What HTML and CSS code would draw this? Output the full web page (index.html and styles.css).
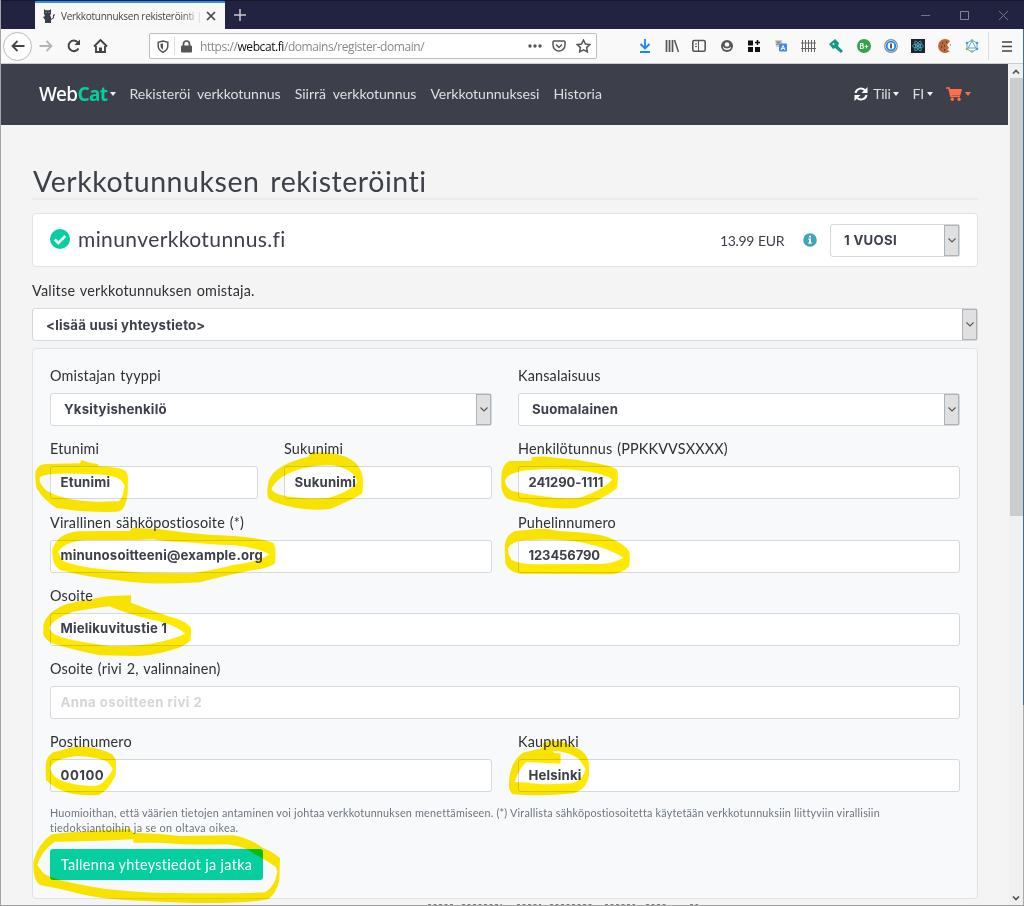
FILE: index.html
```html
<!DOCTYPE html>
<html lang="fi">
<head>
<meta charset="utf-8">
<title>Verkkotunnuksen rekisteröinti | WebCat</title>
<link rel="stylesheet" href="styles.css">
</head>
<body>
<div class="window">
  <header class="tabbar">
    <div class="tab">
      <svg class="cat" width="12" height="14" viewBox="0 0 12 14"><path fill="#39404c" d="M1 0 2.500 1.200h4L8 0v5L7 6.500 8 8v2l2-1.500V6l1.500-1 .5 1-1 1v2l-3 2v3H2v-3L0 8l2-1L1 5z"/><path d="M2.500 3.500h1M5.500 3.500h1" stroke="#aab"/></svg>
      <span class="tab-title">Verkkotunnuksen rekisteröinti |</span>
      <svg width="10" height="10" viewBox="0 0 10 10"><path d="M1 1l8 8M9 1 1 9" stroke="#444" stroke-width="1.700"/></svg>
    </div>
    <svg class="plus" width="12" height="12" viewBox="0 0 12 12"><path d="M6 0v12M0 6h12" stroke="#c7c7d2" stroke-width="1.500"/></svg>
    <div class="controls">
      <svg width="9" height="9"><path d="M0 4.500h9" stroke="#74748a"/></svg>
      <svg width="9" height="9"><path d="M.5.5h8v8h-8z" fill="none" stroke="#858598"/></svg>
      <svg width="9" height="9"><path d="M0 0l9 9M9 0 0 9" stroke="#74748a"/></svg>
    </div>
  </header>
  <div class="toolbar">
    <div class="back"><svg width="14" height="14" viewBox="0 0 14 14"><path d="M13.500 7H1.500M6.500 2l-5 5 5 5" fill="none" stroke="#444" stroke-width="1.800"/></svg></div>
    <svg class="forward" width="14" height="14" viewBox="0 0 14 14"><path d="M.5 7h12M7.500 2l5 5-5 5" fill="none" stroke="#b4b4b6" stroke-width="1.800"/></svg>
    <svg class="reload" width="14" height="14" viewBox="0 0 14 14"><path d="M11.500 9.500A5.300 5.300 0 1 1 11 3.500" fill="none" stroke="#444" stroke-width="1.900"/><path d="M13 .5V6H7.500z" fill="#444"/></svg>
    <svg class="home" width="15" height="14" viewBox="0 0 15 14"><path d="M1 7.500 7.500 1 14 7.500M3 7v6h9V7" fill="none" stroke="#444" stroke-width="1.900"/><path d="M6 13V8.500h3V13" fill="#444"/></svg>
    <div class="address">
      <svg width="12" height="13" viewBox="0 0 12 13"><path d="M6 1 1.200 2.300V6c0 3 2 5 4.800 6.200C8.800 11 10.800 9 10.800 6V2.300z" fill="none" stroke="#555" stroke-width="1.500"/><path d="M6 3.300 3.500 4v2c0 1.500 1 2.900 2.500 3.700z" fill="#555"/></svg>
      <span class="divider"></span>
      <svg class="lock" width="11" height="13" viewBox="0 0 11 13"><path d="M2.500 6V4a3 3 0 0 1 6 0v2" fill="none" stroke="#555" stroke-width="1.700"/><rect y="5.500" width="11" height="7" rx="1" fill="#555"/></svg>
      <span class="url">https://<b>webcat.fi</b>/domains/register-domain/</span>
      <svg class="dots" width="14" height="4"><g fill="#555"><circle cx="2" cy="2" r="1.700"/><circle cx="7" cy="2" r="1.700"/><circle cx="12" cy="2" r="1.700"/></g></svg>
      <svg class="pocket" width="14" height="13" viewBox="0 0 14 13"><path d="M2 1h10q1 0 1 1v3a6 6 0 0 1-12 0V2q0-1 1-1z" fill="none" stroke="#555" stroke-width="1.500"/><path d="M4 4.500l3 3 3-3" fill="none" stroke="#555" stroke-width="1.500"/></svg>
      <svg width="15" height="14" viewBox="0 0 15 14"><path d="M7.500 1l1.900 4 4.300.6-3.100 3 .8 4.300-3.900-2-3.900 2 .8-4.300-3.100-3L5.600 5z" fill="none" stroke="#555" stroke-width="1.500"/></svg>
    </div>
    <div class="extensions">
      <svg width="14" height="14" viewBox="0 0 14 14"><path d="M7 0v9M2.500 5l4.500 4.500L11.500 5M2 13h10" fill="none" stroke="#1588ff" stroke-width="1.800"/></svg>
      <svg width="14" height="14" viewBox="0 0 14 14"><path d="M1.500 1v12M4.500 1v12M7.500 1v12" stroke="#555" stroke-width="1.700"/><path d="M9.500 1l4 12" stroke="#555" stroke-width="1.500"/></svg>
      <svg width="14" height="14" viewBox="0 0 14 14"><rect x=".8" y="1.500" width="12.400" height="10.800" rx="1.500" fill="none" stroke="#555" stroke-width="1.600"/><path d="M6.500 2v10M3 5h2M3 7.500h2" stroke="#555"/></svg>
      <svg width="14" height="14" viewBox="0 0 14 14"><circle cx="7" cy="7" r="6" fill="#555"/><circle cx="7" cy="5.500" r="2.300" fill="#f9f9fa"/><path d="M3 7.500q0 3.500 4 3.500t4-3.500q-1.500 2-4 2t-4-2z" fill="#f9f9fa"/></svg>
      <svg width="14" height="14" viewBox="0 0 14 14"><path d="M1 1.500h5v5H1zM1 8h5v5H1zM8 8h5v5H8z" fill="#111"/><path d="M10.500 1v5M8 3.500h5" stroke="#111" stroke-width="1.500"/></svg>
      <svg width="14" height="14" viewBox="0 0 14 14"><path d="M1 1h7v7H2z" fill="#ccc"/><path d="M2 3h5M4 2v4M2 6l4-3" stroke="#887"/><rect x="5" y="4.500" width="8" height="8" rx="1" fill="#4285f4"/><path d="M7 11l2-4.500L11 11M8 9.500h2" stroke="#fff" fill="none"/></svg>
      <svg width="15" height="14" viewBox="0 0 15 14"><path d="M1.500 1v12M4.500 1v12M7.500 1v12M10.500 1v12M13.500 1v12M0 4h15M0 9.500h15" stroke="#666"/></svg>
      <svg width="14" height="14" viewBox="0 0 14 14"><path d="M0 5 6 0l4 4-1 3 5 5-2 2-6-5-2 1z" fill="#139a86"/><circle cx="4.500" cy="5" r="1" fill="#d8f3ef"/></svg>
      <svg width="14" height="14" viewBox="0 0 14 14"><circle cx="7" cy="7" r="7" fill="#36a34b"/><text x="2.400" y="9.600" class="ext-text">B+</text></svg>
      <svg width="14" height="14" viewBox="0 0 14 14"><circle cx="7" cy="7" r="6.300" fill="#fff" stroke="#889" stroke-width="1.200"/><circle cx="7" cy="7" r="4.300" fill="#fff" stroke="#1687f5" stroke-width="1.800"/><path d="M7 4.500v5" stroke="#333" stroke-width="1.600"/></svg>
      <svg width="14" height="14" viewBox="0 0 14 14"><path d="M0 0h14v14H0z" fill="#20232a"/><g fill="none" stroke="#45b7d0" stroke-width=".8"><ellipse cx="7" cy="7" rx="5.500" ry="2"/><ellipse cx="7" cy="7" rx="5.500" ry="2" transform="rotate(60 7 7)"/><ellipse cx="7" cy="7" rx="5.500" ry="2" transform="rotate(120 7 7)"/></g><circle cx="7" cy="7" r="1" fill="#6ddcf3"/></svg>
      <svg width="14" height="14" viewBox="0 0 14 14"><path d="M12 2a7 7 0 1 0 0 10l-3-1 2-2-2-3z" fill="#b8683c"/><circle cx="12.500" cy="6" r=".7" fill="#b8683c"/><path d="M4 4h1M8 3h1M3 8h1M6 7h1M6 11h1" stroke="#532d1a" stroke-width="1.300"/></svg>
      <svg width="14" height="14" viewBox="0 0 14 14"><path d="M7 1l5 3v6l-5 3-5-3V4z" fill="none" stroke="#62a9dc"/><path d="M7 2l4 7H3z" fill="none" stroke="#62a9dc"/><g fill="#89bd57"><circle cx="7" cy="1.500" r="1.300"/><circle cx="7" cy="12.500" r="1.300"/><circle cx="2" cy="10" r="1.300"/></g><g fill="#4b9bd7"><circle cx="2" cy="4" r="1.300"/><circle cx="12" cy="4" r="1.300"/><circle cx="12" cy="10" r="1.300"/></g></svg>
    </div>
    <span class="tool-divider"></span>
    <svg class="menu" width="10" height="11"><path d="M0 1h10M0 5.500h10M0 10h10" stroke="#444" stroke-width="1.500"/></svg>
  </div>
  <div class="viewport">
    <div class="page">
      <nav class="navbar">
        <div class="brand">Web<span>Cat</span></div><i class="caret"></i>
        <a class="first">Rekisteröi verkkotunnus</a><a>Siirrä verkkotunnus</a><a>Verkkotunnuksesi</a><a>Historia</a>
        <div class="nav-right">
          <svg width="14" height="14" viewBox="0 0 14 14"><path d="M1.500 6A5.500 5.500 0 0 1 11.500 4M12.500 8A5.500 5.500 0 0 1 2.500 10" fill="none" stroke="#fff" stroke-width="2"/><path d="M13.500 0v6h-6zM.5 14V8h6z" fill="#fff"/></svg>
          <span class="account">Tili</span><i class="caret"></i>
          <span class="lang">FI</span><i class="caret"></i>
          <svg class="cart" width="17" height="14" viewBox="0 0 17 14"><path d="M0 1h3l2 8.500h9" fill="none" stroke="#ff7046" stroke-width="1.700"/><path d="M3.500 2H16l-1.700 6.500H5z" fill="#ff7046"/><circle cx="6.300" cy="12.300" r="1.700" fill="#ff7046"/><circle cx="13" cy="12.300" r="1.700" fill="#ff7046"/></svg><i class="caret orange"></i>
        </div>
      </nav>
      <main>
        <h1>Verkkotunnuksen rekisteröinti</h1>
        <section class="domain">
          <svg width="20" height="20" viewBox="0 0 20 20"><circle cx="10" cy="10" r="10" fill="#06cf9f"/><path d="M4.700 10.500l3.600 3.500 7-7" fill="none" stroke="#fff" stroke-width="2.600"/></svg>
          <h2>minunverkkotunnus.fi</h2>
          <span class="price">13.99 EUR</span>
          <svg class="info" width="14" height="14" viewBox="0 0 14 14"><circle cx="7" cy="7" r="6.800" fill="#3ea5bd"/><path d="M6 2.700h2v1.800H6zM5.300 5.500H8v4h.8v1.200H5.200V9.500H6V6.700h-.7z" fill="#fff"/></svg>
          <div class="select year"><span>1 VUOSI</span><i><svg width="8" height="5"><path d="M.5.5 4 4 7.500.5" fill="none" stroke="#555" stroke-width="1.100"/></svg></i></div>
        </section>
        <p class="owner">Valitse verkkotunnuksen omistaja.</p>
        <div class="select contact"><span>&lt;lisää uusi yhteystieto&gt;</span><i><svg width="8" height="5"><path d="M.5.5 4 4 7.500.5" fill="none" stroke="#555" stroke-width="1.100"/></svg></i></div>
        <form class="form">
          <div class="row">
            <div class="field"><label>Omistajan tyyppi</label><div class="select"><span>Yksityishenkilö</span><i><svg width="8" height="5"><path d="M.5.5 4 4 7.500.5" fill="none" stroke="#555" stroke-width="1.100"/></svg></i></div></div>
            <div class="field"><label>Kansalaisuus</label><div class="select"><span>Suomalainen</span><i><svg width="8" height="5"><path d="M.5.5 4 4 7.500.5" fill="none" stroke="#555" stroke-width="1.100"/></svg></i></div></div>
          </div>
          <div class="row">
            <div class="row inner"><div class="field"><label>Etunimi</label><input value="Etunimi"></div><div class="field"><label>Sukunimi</label><input value="Sukunimi"></div></div>
            <div class="field"><label>Henkilötunnus (PPKKVVSXXXX)</label><input class="digits" value="241290-1111"></div>
          </div>
          <div class="row">
            <div class="field"><label>Virallinen sähköpostiosoite (*)</label><input value="minunosoitteeni@example.org"></div>
            <div class="field"><label>Puhelinnumero</label><input class="digits" value="123456790"></div>
          </div>
          <div class="row"><div class="field"><label>Osoite</label><input value="Mielikuvitustie 1"></div></div>
          <div class="row"><div class="field"><label>Osoite (rivi 2, valinnainen)</label><input placeholder="Anna osoitteen rivi 2"></div></div>
          <div class="row">
            <div class="field"><label>Postinumero</label><input class="postal" value="00100"></div>
            <div class="field"><label>Kaupunki</label><input value="Helsinki"></div>
          </div>
          <p class="help"><span>Huomioithan, että väärien tietojen antaminen voi johtaa verkkotunnuksen menettämiseen. (*) Virallista sähköpostiosoitetta käytetään verkkotunnuksiin liittyviin virallisiin</span><br><span class="help-end">tiedoksiantoihin ja se on oltava oikea.</span></p>
          <button type="button">Tallenna yhteystiedot ja jatka</button>
        </form>
      </main>
    </div>
    <div class="scrollbar">
      <svg class="up" width="8" height="5"><path d="M1 4.500 4 1.500l3 3" fill="none" stroke="#555" stroke-width="1.700"/></svg>
      <div class="thumb"></div>
      <svg class="down" width="8" height="5"><path d="M1 .5l3 3 3-3" fill="none" stroke="#555" stroke-width="1.700"/></svg>
    </div>
  </div>
  <div class="edge"></div>
</div>
<svg class="marker" width="1024" height="906" viewBox="0 0 1024 906" fill="#ffe900" fill-rule="evenodd">
  <path d="M428 904.500h26M462 904.500h40M517 904.500h24M550 904.500h44M605 904.500h30M646 904.500h22M690 904.500h8" stroke="#888" stroke-dasharray="3 2.500"/>
  <g transform="translate(20 360) scale(.33333)">
    <path d="M46 345Q46 315 75 312L180 310 184 300 212 309 234 312 236 319Q300 321 315 332 325 340 324 360L323 400Q318 445 300 453 290 458 190 454L150 450Q130 445 110 445 70 420 50 385 45 365 46 345ZM62 350Q85 337 200 342 280 343 300 358 318 375 312 385 308 420 295 424 220 428 165 420 110 410 80 392 62 375 60 365 56 355 62 350Z"/>
    <path d="M743 380Q745 350 770 330 800 305 865 290L872 278Q950 272 995 300 1020 315 1028 350 1030 390 1025 402 985 425 930 447 880 453 825 443 760 430 745 415 740 400 743 380ZM755 385Q775 345 850 325 910 310 960 320 1005 335 1012 365 1000 390 925 414 850 418 795 408 755 400 755 385Z"/>
  </g>
  <g transform="translate(480 430) scale(.33333)">
    <path d="M64 140Q66 100 90 93 130 92 155 92L155 82Q190 76 232 84 290 88 340 98 400 108 412 120 416 150 411 175 360 215 290 234 240 238 180 230L140 218Q100 215 80 205 66 190 64 170ZM75 150Q85 125 150 120 240 113 310 122 370 130 397 148 370 180 300 203 240 208 185 198 120 190 95 182 75 170 75 150Z"/>
    <path d="M74 350Q76 315 105 303L150 299Q190 292 235 303 340 308 380 320 435 340 448 365 452 400 445 412 425 430 395 433L120 431Q85 425 76 400ZM84 355Q95 332 140 330 240 325 310 338 390 355 431 383 400 400 360 402L165 403Q115 402 95 390 83 375 84 355Z"/>
  </g>
  <g transform="translate(20 510) scale(.33333)">
    <path d="M97 120Q110 70 175 64L330 63 335 53 420 58 500 68 580 75Q700 78 760 98 770 115 765 160 750 175 700 180 600 200 540 217 440 223 370 219 270 210 180 194L120 180Q95 165 97 120ZM114 125Q140 92 200 90L342 90 400 88Q450 96 520 98 600 105 640 105 720 115 748 133 720 155 640 165 560 185 510 190L370 188Q250 180 200 172 140 160 125 150Z"/>
    <path d="M70 345Q80 305 140 282 180 272 220 268 240 258 333 256L333 278Q390 300 450 320 505 335 513 355L512 390Q495 410 455 420 400 437 350 438L240 436Q160 420 95 400 70 385 70 370ZM88 353Q100 325 160 305 220 295 268 289 330 315 400 330 470 345 495 371 470 385 400 400 350 410 270 408 170 395 120 380 92 370 88 353Z"/>
  </g>
  <g transform="translate(20 730) scale(.33333)">
    <path d="M77 110Q76 80 100 67 130 60 155 52 200 45 235 57L262 66Q290 75 288 105L287 135Q280 150 265 172 250 190 235 195 190 198 150 190 100 175 78 150ZM90 115Q100 85 170 78 230 80 262 95L278 115Q275 130 255 150 245 165 225 168 180 168 145 158 100 150 90 115Z"/>
    <path d="M40 395Q55 340 95 313 150 305 330 297L340 308 420 312 480 318 640 316Q690 325 727 353 760 365 780 385L778 450Q770 490 745 507 690 520 520 519L420 515Q250 510 185 493 120 475 60 465 38 450 40 395ZM52 405Q65 360 105 335 200 335 340 328L341 338 420 338Q500 346 620 343 680 350 700 370 740 390 768 412L772 425Q765 470 735 487 650 492 400 488 250 480 190 465 100 450 70 430Z"/>
  </g>
  <g transform="translate(480 730) scale(.347)">
    <path d="M84 145Q88 90 125 65 150 60 180 52L182 37Q230 20 272 50 315 65 314 105L314 130Q308 172 270 182 200 190 130 187L95 185Q80 175 84 145ZM100 150Q115 105 135 92L232 97 232 68 212 66 212 60Q270 65 290 90L304 112Q300 140 270 153 180 160 140 152Z"/>
  </g>
</svg>
</body>
</html>
```
FILE: styles.css
```css
* { box-sizing: border-box; }
body { margin: 0; width: 1024px; height: 906px; overflow: hidden; font-family: Lato, sans-serif; color: #3d404b; }
svg { display: block; flex: none; }
.window { position: relative; width: 1024px; height: 906px; display: flex; flex-direction: column; border-left: 1px solid #a5a5a5; border-bottom: 1px solid #a0a0a0; background: #f4f4f4; }
.edge { position: absolute; right: 0; top: 29px; width: 1px; height: 876px; background: linear-gradient(#426d91 0 676px, #aaa 676px); }
.tabbar { height: 29px; flex: none; background: #222341; border-top: 1px solid #161728; display: flex; align-items: center; padding-left: 34px; }
.tab { width: 190px; height: 28px; border-top: 2px solid #2491f3; background: #f8f8f9; display: flex; align-items: center; padding-left: 8px; }
.tab-title { width: 139px; margin: 0 6px 0 6px; white-space: nowrap; font: 10px "Open Sans", sans-serif; letter-spacing: -.27px; color: #444; -webkit-mask-image: linear-gradient(90deg, #000 85%, #0003 100%); }
.plus { margin-left: 9px; }
.controls { margin-left: auto; display: flex; gap: 30px; padding-right: 16px; }
.toolbar { height: 35px; flex: none; background: #f9f9fa; border-bottom: 1px solid #ccc; display: flex; align-items: center; }
.back { width: 29px; height: 29px; margin-left: 2px; border: 1px solid #bbb; border-radius: 50%; background: #fff; display: grid; place-items: center; }
.forward { margin-left: 7px; }
.reload { margin-left: 14px; }
.home { margin-left: 12px; }
.address { width: 448px; height: 26px; margin-left: 41px; border: 1px solid #bdbdbf; border-radius: 2px; background: #fff; display: flex; align-items: center; padding-left: 7px; }
.divider { width: 1px; height: 18px; background: #ddd; margin: 0 6px 0 5px; }
.url { width: 328px; margin: 1px 0 0 8px; white-space: nowrap; font: 12px "Open Sans", sans-serif; letter-spacing: -.43px; color: #888; }
.url b { font-weight: 400; color: #111; }
.pocket { margin: 0 10px; }
.extensions { display: flex; align-items: center; margin-left: 41px; gap: 13.2px; }
.ext-text { font: bold 7px Inter, sans-serif; fill: #fff; }
.tool-divider { width: 1px; height: 28px; background: #ddd; margin-left: 9px; }
.menu { margin-left: 13px; }
.viewport { flex: 1; min-height: 0; display: flex; padding-right: 1px; }
.page { width: 1007px; overflow: hidden; background: #f4f4f4; }
.navbar { height: 61px; background: #3d404a; display: flex; align-items: center; padding: 0 37px 2px 38px; font-size: 14.1px; color: #dedfe2; white-space: nowrap; }
.brand { font: 500 19px "Noto Sans", sans-serif; letter-spacing: -.6px; color: #fff; }
.brand span { font-weight: 700; color: #06cf9f; }
.caret { border: 3.5px solid transparent; border-top: 4px solid #f3f3f3; border-bottom: 0; margin-left: 3px; }
.caret.orange { border-top-color: #ff7046; margin-left: 2px; }
.navbar a { margin-left: 14px; word-spacing: 3.5px; letter-spacing: -.03px; }
.navbar .first { margin-left: 13px; }
.nav-right { margin-left: auto; display: flex; align-items: center; }
.account { margin-left: 5px; letter-spacing: -.3px; }
.lang { margin-left: 13px; letter-spacing: -.2px; }
.cart { margin-left: 13px; }
main { padding: 39px 30px 0 31px; }
h1 { margin: 0 0 13px; height: 36px; padding-left: 1px; border-bottom: 2px solid #ebebeb; font-size: 28.5px; line-height: 35px; font-weight: 400; letter-spacing: .55px; word-spacing: 3px; }
.domain { height: 54px; border: 1px solid #e0e3e6; border-radius: 4px; background: #fff; display: flex; align-items: center; padding: 0 17px; }
.domain > svg:first-child { margin-top: -3px; }
h2 { font-size: 21px; line-height: 28px; font-weight: 400; margin: -3px auto 0 8px; letter-spacing: .4px; }
.price { font-size: 14px; letter-spacing: -.4px; word-spacing: 1px; }
.info { margin: 0 13px 0 19px; }
.select { height: 33px; background: #fff; border: 1px solid #d3d9df; border-radius: 3px; display: flex; align-items: stretch; font: 700 13.2px Inter, sans-serif; letter-spacing: .22px; }
.select > span { flex: 1; line-height: 31px; padding-left: 13px; }
.select > i { width: 15px; border: 1px solid #aeb3b8; background: #e0e0e0; display: grid; place-items: center; }
.year { width: 130px; }
.year > span { letter-spacing: .3px; }
.contact > span { line-height: 32px; }
.owner { margin: 14px 0 7px; font-size: 14.4px; line-height: 20px; letter-spacing: .22px; word-spacing: 1px; color: #2f3136; }
.form { margin-top: 7px; height: 551px; border: 1px solid #dfe3e6; border-radius: 4px; background: #f8f9fa; padding: 17px; }
.row { display: flex; gap: 26px; height: 73.3px; }
.row > * { flex: 1 1 0; min-width: 0; }
label { display: block; height: 27px; line-height: 19px; font-size: 14.4px; letter-spacing: .17px; word-spacing: 1px; color: #2f3136; white-space: nowrap; }
input { display: block; width: 100%; height: 33px; border: 1px solid #d3d9df; border-radius: 3px; background: #fff; padding: 0 9.5px 2px; font: 700 13.2px Inter, sans-serif; letter-spacing: .17px; color: #3d404b; outline: 0; }
input.digits { font-size: 13px; letter-spacing: -.1px; }
input.postal { letter-spacing: .5px; }
input::placeholder { color: #d4d6d8; opacity: 1; letter-spacing: .45px; }
.help { margin: -1px 0 14px; font-size: 10.8px; line-height: 15.3px; color: #6c757d; white-space: nowrap; }
.help span { letter-spacing: .21px; }
.help .help-end { letter-spacing: .32px; }
button { display: block; width: 213px; height: 31px; padding: 0; border: 0; border-radius: 3px; background: #06cf9f; color: #fff; font: 14.4px Lato, sans-serif; letter-spacing: .32px; }
.scrollbar { width: 14px; margin-left: auto; background: #f0f0f0; display: flex; flex-direction: column; align-items: center; }
.up { margin: 5px 0 4px; }
.thumb { width: 13px; height: 438px; background: #cdcdcd; }
.down { margin: auto 0 4px; }
.marker { position: absolute; left: 0; top: 0; mix-blend-mode: multiply; pointer-events: none; }
```
